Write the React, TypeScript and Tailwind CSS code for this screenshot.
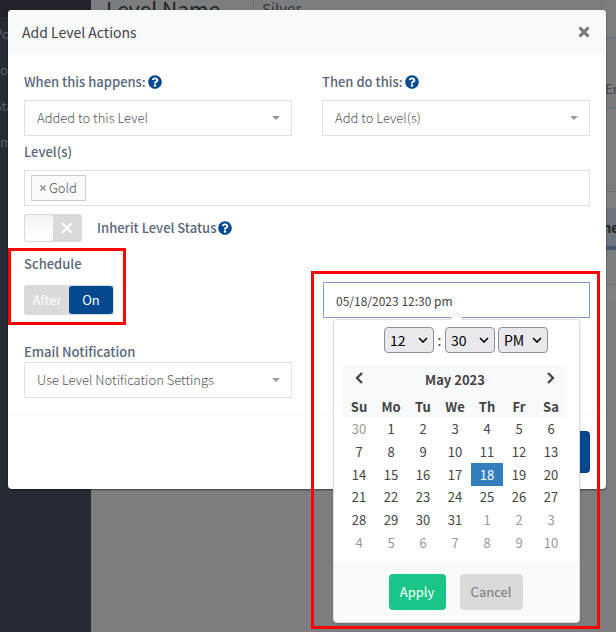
import React, { useState } from "react";
import { FaQuestionCircle } from "react-icons/fa";

const weekDays = ["Su", "Mo", "Tu", "We", "Th", "Fr", "Sa"];

const weeks = [
  [30, 1, 2, 3, 4, 5, 6],
  [7, 8, 9, 10, 11, 12, 13],
  [14, 15, 16, 17, 18, 19, 20],
  [21, 22, 23, 24, 25, 26, 27],
  [28, 29, 30, 31, 1, 2, 3],
  [4, 5, 6, 7, 8, 9, 10],
];

const isOutside = (week: number, day: number) =>
  (week === 0 && day > 7) || (week > 3 && day < 20);

const Help = () => (
  <button type="button" aria-label="Help" className="text-[#04498f]">
    <FaQuestionCircle className="h-[14px] w-[14px]" />
  </button>
);

const SelectField = ({ id, value }: { id: string; value: string }) => (
  <div className="relative">
    <select
      id={id}
      className="h-9 w-full appearance-none border border-[#dae1ec] bg-white px-3 text-[13px] font-light text-[#555]"
    >
      <option>{value}</option>
    </select>
    <span className="pointer-events-none absolute top-4 right-3 border-x-4 border-t-4 border-x-transparent border-t-[#999]" />
  </div>
);

const TimeSelect = ({ label, value }: { label: string; value: string }) => (
  <div className="relative">
    <select
      aria-label={label}
      className="h-[26px] w-[50px] appearance-none rounded border border-[#8f8f9d] bg-[#e9e9ed] pl-[5px] text-[14px] text-black"
    >
      <option>{value}</option>
    </select>
    <svg
      viewBox="0 0 10 6"
      className="pointer-events-none absolute top-[10px] right-[6px] h-[6px] w-[10px]"
      fill="none"
      stroke="#000"
      strokeWidth="1.6"
    >
      <path d="M1 1l4 4 4-4" />
    </svg>
  </div>
);

// Red frame drawn around a highlighted part of the form
const Callout = ({ className }: { className: string }) => (
  <div className={`pointer-events-none absolute border-3 border-[#fe0000] ${className}`} />
);

const Calendar = () => (
  <table className="w-full table-fixed text-center text-[13px] text-[#444]">
    <thead className="bg-[#f8f9fb] font-bold">
      <tr className="h-[30px]">
        <th>
          <button type="button" aria-label="Previous month" className="block w-full pb-1">
            <svg viewBox="0 0 8 12" className="mx-auto h-3 w-2" fill="none" stroke="#444" strokeWidth="2.3">
              <path d="M7 1L2 6l5 5" />
            </svg>
          </button>
        </th>
        <th colSpan={5}>May 2023</th>
        <th>
          <button type="button" aria-label="Next month" className="block w-full pb-1">
            <svg viewBox="0 0 8 12" className="mx-auto h-3 w-2" fill="none" stroke="#444" strokeWidth="2.3">
              <path d="M1 1l5 5-5 5" />
            </svg>
          </button>
        </th>
      </tr>
      <tr className="h-[23px]">
        {weekDays.map((day) => (
          <th key={day}>{day}</th>
        ))}
      </tr>
    </thead>
    <tbody className="h-[136px]">
      {weeks.map((week, w) => (
        <tr key={w}>
          {week.map((day) => {
            const selected = w === 2 && day === 18;
            return (
              <td
                key={day}
                className={
                  selected
                    ? "bg-[#357ebd] text-white"
                    : isOutside(w, day)
                      ? "text-[#999]"
                      : ""
                }
              >
                {day}
              </td>
            );
          })}
        </tr>
      ))}
    </tbody>
  </table>
);

const DatePicker = () => (
  <div className="absolute top-[37px] left-[10px] z-10 w-[247px] rounded border border-[#ddd] bg-white leading-[20px] shadow-sm">
    <span className="absolute -top-[6px] left-[118px] h-[9px] w-[9px] rotate-45 border-t border-l border-[#ddd] bg-white" />
    <div className="flex items-center pt-[7px] pl-[50px]">
      <TimeSelect label="Hour" value="12" />
      <span className="w-[11px] text-center text-[14px] text-[#444]">:</span>
      <TimeSelect label="Minute" value="30" />
      <div className="ml-[3px]">
        <TimeSelect label="AM or PM" value="PM" />
      </div>
    </div>
    <div className="pt-3 pr-3 pb-2 pl-[9px]">
      <Calendar />
    </div>
    <div className="flex justify-center gap-[14px] rounded-b bg-[#f8f9fb] py-3 pr-[2px] text-[13px]">
      <button type="button" className="h-9 w-[57px] rounded bg-[#19c687] text-white">
        Apply
      </button>
      <button type="button" className="h-9 w-[63px] rounded bg-[#dadada] text-[#777]">
        Cancel
      </button>
    </div>
  </div>
);

const Modal = () => {
  const [mode, setMode] = useState("on");
  const [date, setDate] = useState("05/18/2023 12:30 pm");

  return (
    <div
      role="dialog"
      aria-labelledby="modal-title"
      className="relative mr-[10px] ml-2 rounded bg-white text-[13px] leading-[20px] text-[#5a6779] shadow-[0_1px_2px_rgba(0,0,0,0.5)]"
    >
      <header className="flex h-11 items-center justify-between rounded-t bg-[#f8f9fb] pr-4 pl-[14px]">
        <h1 id="modal-title" className="text-[14px] text-[#444]">
          Add Level Actions
        </h1>
        <button type="button" aria-label="Close">
          <svg viewBox="0 0 12 12" className="h-3 w-3" stroke="#777" strokeWidth="3">
            <path d="M1.5 1.5l9 9M10.5 1.5l-9 9" />
          </svg>
        </button>
      </header>

      <div className="px-4 pt-[18px] pb-4">
        <div className="grid grid-cols-2 gap-[30px]">
          <div>
            <div className="mb-2 flex h-5 items-center gap-[2px]">
              <label htmlFor="event" className="font-medium">
                When this happens:
              </label>
              <Help />
            </div>
            <SelectField id="event" value="Added to this Level" />
          </div>
          <div>
            <div className="mb-2 flex h-5 items-center gap-[2px]">
              <label htmlFor="action" className="font-medium">
                Then do this:
              </label>
              <Help />
            </div>
            <SelectField id="action" value="Add to Level(s)" />
          </div>
        </div>

        <label htmlFor="levels" className="mt-[6px] mb-2 block font-medium">
          Level(s)
        </label>
        <div className="flex h-9 items-center border border-[#dae1ec] px-[6px]">
          <button
            type="button"
            className="flex h-[26px] items-center gap-[3px] border border-[#ccc] bg-[#f8f9fb] px-2 font-light text-[#555]"
          >
            <svg viewBox="0 0 6 6" className="h-[6px] w-[6px]" stroke="#999" strokeWidth="1.6">
              <path d="M0.5 0.5l5 5M5.5 0.5l-5 5" />
            </svg>
            Gold
          </button>
          <input id="levels" className="min-w-0 flex-1 px-2 outline-none" />
        </div>

        <div className="mt-2 flex items-center gap-[2px]">
          <label className="relative flex items-center gap-[15px] font-medium">
            <input type="checkbox" className="sr-only" />
            <span className="flex h-7 w-[58px] rounded-[3px] bg-[#dadada] p-px">
              <span className="w-7 rounded-[3px] bg-linear-to-b from-[#f3f3f3] to-white" />
              <svg viewBox="0 0 12 12" className="m-auto h-3 w-3" stroke="#fff" strokeWidth="2">
                <path d="M1 1l10 10M11 1L1 11" />
              </svg>
            </span>
            Inherit Level Status
          </label>
          <Help />
        </div>

        <div className="mt-3 grid grid-cols-2 gap-[30px]">
          <div className="relative">
            <Callout className="-top-[6px] -left-4 h-[77px] w-[118px]" />
            <p className="font-medium">Schedule</p>
            <div className="mt-[11px] inline-flex h-[30px] rounded-[3px] bg-[#dadada] p-px text-white">
              <button
                type="button"
                onClick={() => setMode("after")}
                className={mode === "after" ? "w-11 rounded-[3px] bg-[#04498f]" : "w-11 rounded-[3px]"}
              >
                After
              </button>
              <button
                type="button"
                onClick={() => setMode("on")}
                className={mode === "on" ? "w-11 rounded-[3px] bg-[#04498f]" : "w-11 rounded-[3px]"}
              >
                On
              </button>
            </div>
          </div>
          <div className="relative mt-7 ml-px h-9">
            <input
              aria-label="Schedule date"
              value={date}
              onChange={(e) => setDate(e.target.value)}
              className="h-9 w-full border border-[#7b9ecb] px-3 text-[12px] text-[#444] outline-none"
            />
            <DatePicker />
            <Callout className="-top-[11px] -right-[10px] -left-[12px] z-20 h-[358px]" />
          </div>
        </div>

        <div className="mt-6 grid grid-cols-2 gap-[30px]">
          <div>
            <label htmlFor="email" className="block font-medium">
              Email Notification
            </label>
            <SelectField id="email" value="Use Level Notification Settings" />
          </div>
        </div>
      </div>

      <footer className="flex justify-end border-t border-[#f8f9fb] p-4">
        <button type="button" aria-label="Save" className="h-[42px] w-20 rounded bg-[#04498f]" />
      </footer>
    </div>
  );
};

// Page behind the dialog, already dimmed
const Backdrop = () => (
  <div aria-hidden="true" className="absolute inset-0 flex overflow-hidden bg-[#7c7d7e]">
    <nav className="w-[91px] bg-[#272c34] text-[13px] leading-[20px] text-[#5d6167]">
      <div className="h-[17px] bg-[#20242a]" />
      <ul className="mt-[7px] -ml-[6px] flex flex-col gap-4">
        <li>Po</li>
        <li className="pl-[6px]">or</li>
        <li>Sta</li>
        <li className="pl-[6px]">m</li>
      </ul>
    </nav>
    <div className="flex flex-1 items-start justify-between">
      <div className="flex">
        <p className="w-[162px] pl-[15px] text-[21px] leading-[18px] text-[#222]">Level Name</p>
        <p className="h-9 border-l border-[#6d7176] pl-2 text-[15px] leading-[18px] text-[#333]">Silver</p>
      </div>
      <div className="w-[15px] border-l border-[#6d7176] pt-[37px] text-[13px]">
        <p className="h-[72px] border-y-2 border-[#6c757f] bg-[#797b7e] pt-10 pl-[3px] leading-[20px] text-[#444]">
          Em
        </p>
        <div className="mt-[82px] h-[17px] border-t border-[#6d7176] bg-[#808080]" />
        <p className="h-[42px] border-b-4 border-[#45586e] bg-[#6c747d] pt-[10px] pl-px font-bold leading-[20px] text-[#222]">
          ne
        </p>
        <div className="h-[51px] pt-[34px]">
          <div className="h-[17px] border-t border-[#6d7176] bg-[#808080]" />
        </div>
      </div>
    </div>
  </div>
);

const App = () => (
  <main className="relative min-h-screen overflow-hidden pt-[10px] font-['Noto_Sans_CJK_SC',sans-serif]">
    <Backdrop />
    <Modal />
  </main>
);

export default App;
